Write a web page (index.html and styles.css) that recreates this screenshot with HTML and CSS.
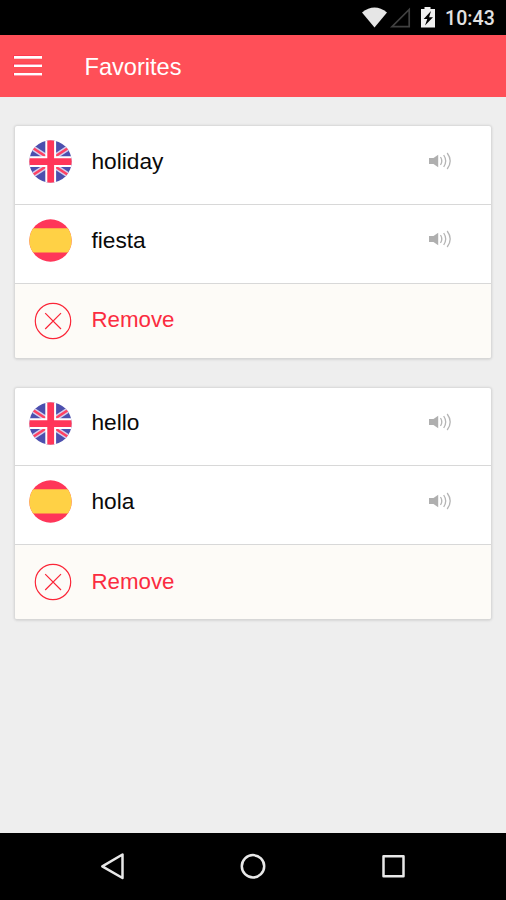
FILE: index.html
```html
<!DOCTYPE html>
<html lang="en">
<head>
<meta charset="utf-8">
<title>Favorites</title>
<link rel="stylesheet" href="styles.css">
</head>
<body>
<svg class="defs" width="0" height="0" aria-hidden="true">
  <defs>
    <clipPath id="disc"><circle cx="21.5" cy="21.5" r="21.2"/></clipPath>
    <symbol id="uk" viewBox="0 0 43 43">
      <g clip-path="url(#disc)">
        <path fill="#4c4fae" d="M0 0h43v43H0z"/>
        <path stroke="#d3cdec" stroke-width="5.400" d="M0 5.500L21.500 19.500M43 5.500L21.500 19.500M0 37.500l21.500-14M43 37.500L21.500 23.500"/>
        <path stroke="#ff4163" stroke-width="2.600" d="M0 5.500L21.500 19.500M43 5.500L21.500 19.500M0 37.500l21.500-14M43 37.500L21.500 23.500"/>
        <path fill="#fff" d="M16.300 0h10.800v43H16.300zM0 16.200h43v10.800H0z"/>
        <path fill="#ff3659" d="M18.300 0h6.800v43h-6.800zM0 18.300h43v6.600H0z"/>
      </g>
    </symbol>
    <symbol id="spain" viewBox="0 0 43 43">
      <g clip-path="url(#disc)">
        <path fill="#ff3659" d="M0 0h43v43H0z"/>
        <path fill="#ffd145" d="M0 9.300h43v24.300H0z"/>
      </g>
    </symbol>
    <symbol id="speaker" viewBox="0 0 24 18">
      <path fill="#afafaf" d="M0 6h4.500L9.200 2.800v12.400L4.500 12H0z"/>
      <path fill="none" stroke="#b5b5b5" stroke-width="1.300" d="M11.500 5q2.600 4 0 8M14.700 3q4 6 0 12M18.200 1q6 8 0 16"/>
    </symbol>
    <symbol id="cross" viewBox="0 0 38 38">
      <g fill="none" stroke="#fb2638" stroke-width="1.200"><circle cx="19" cy="19" r="17.700"/><path d="M11.200 11.200l15.800 15.800M27 11.200L11.200 27"/></g>
    </symbol>
  </defs>
</svg>
<div class="status">
  <svg class="signals" width="80" height="35" viewBox="0 0 80 35">
    <path fill="#e6e6e6" d="M0 12.500Q12.500 2.500 25 12.500L12.500 27.500z"/>
    <path fill="none" stroke="#414141" stroke-width="1.700" d="M47.200 9.500v17.200H30z"/>
    <path fill="#f0f0f0" d="M62.500 7h6v2h4.500v18.500H59V9h3.500z"/>
    <path fill="#000" d="M69 11l-7.300 8h3.600L63 25.500l8-8.300h-3.900z"/>
  </svg>
  <span class="clock">10:43</span>
</div>
<header class="bar">
  <svg class="menu" width="30" height="24" viewBox="0 0 30 24">
    <path fill="#ff2045" d="M.5 1.500h28v3H.5zM.5 9.800h28v3H.5zM.5 19h28v3H.5z"/>
    <path fill="#fff" d="M1 2h28v2.700H1zM1 10.400h28v2.600H1zM1 18.900h28v2.500H1z"/>
  </svg>
  <h1>Favorites</h1>
</header>
<main>
  <section class="card">
    <div class="row"><svg class="flag"><use href="#uk"/></svg><span class="word">holiday</span><svg class="speaker"><use href="#speaker"/></svg></div>
    <div class="row"><svg class="flag"><use href="#spain"/></svg><span class="word">fiesta</span><svg class="speaker"><use href="#speaker"/></svg></div>
    <div class="row remove"><svg class="cross"><use href="#cross"/></svg><span class="word">Remove</span></div>
  </section>
  <section class="card">
    <div class="row"><svg class="flag"><use href="#uk"/></svg><span class="word">hello</span><svg class="speaker"><use href="#speaker"/></svg></div>
    <div class="row"><svg class="flag"><use href="#spain"/></svg><span class="word">hola</span><svg class="speaker"><use href="#speaker"/></svg></div>
    <div class="row remove"><svg class="cross"><use href="#cross"/></svg><span class="word">Remove</span></div>
  </section>
</main>
<nav>
  <svg width="506" height="67" viewBox="0 0 506 67" fill="none" stroke="#e8e8e8" stroke-width="2.500" stroke-linejoin="round">
    <path d="M122.500 21.500v23.500L102.300 33.300z"/>
    <circle cx="253" cy="33.300" r="11.200"/>
    <path d="M383.500 23.300h20v20h-20z"/>
  </svg>
</nav>
</body>
</html>
```

FILE: styles.css
```css
* { box-sizing: border-box; }
body {
  margin: 0;
  height: 900px;
  display: flex;
  flex-direction: column;
  overflow: hidden;
  background: #eee;
  font-family: "Liberation Sans", Arial, sans-serif;
}
.defs { position: absolute; }
.status {
  height: 35px;
  flex: none;
  display: flex;
  align-items: center;
  padding-left: 362px;
  background: #000;
}
.signals { flex: none; }
.clock {
  margin: 2px 0 0 3px;
  color: #e2e2e2;
  font: 500 19.5px/24px Roboto, sans-serif;
  letter-spacing: 0.1px;
}
.bar {
  height: 62px;
  flex: none;
  display: flex;
  align-items: flex-start;
  padding-left: 13px;
  background: #ff4f58;
}
.menu { margin-top: 19px; flex: none; }
h1 {
  margin: 17px 0 0 41.5px;
  color: #fff;
  font-size: 23.6px;
  font-weight: 400;
  line-height: 30px;
}
main {
  flex: 1;
  padding: 29px 15px 0;
}
.card {
  height: 231.5px;
  margin-bottom: 30px;
  border-radius: 2px;
  background: #fff;
  box-shadow: 0 0 2px 1px #d8d8d8, 0 1px 3px #c4c4c4;
  overflow: hidden;
}
.row {
  height: 78.8px;
  display: flex;
  align-items: flex-start;
  padding: 14px 38px 0 14px;
  border-bottom: 1px solid #d8d8d8;
}
.flag { width: 43px; height: 43px; flex: none; }
.word {
  flex: 1;
  margin: 5.8px 0 0 19.5px;
  color: #0a0a0a;
  font-size: 22.7px;
  line-height: 30px;
}
.speaker { width: 24px; height: 18px; margin-top: 11.5px; }
.remove {
  height: 74px;
  padding: 18px 0 0 19px;
  border-bottom: 0;
  background: #fdfbf7;
}
.cross { width: 38px; height: 38px; flex: none; }
.remove .word {
  margin: 3.5px 0 0 19.5px;
  color: #fb2c40;
  font-size: 22.3px;
}
nav { height: 67px; flex: none; background: #000; }
nav svg { display: block; }
```
